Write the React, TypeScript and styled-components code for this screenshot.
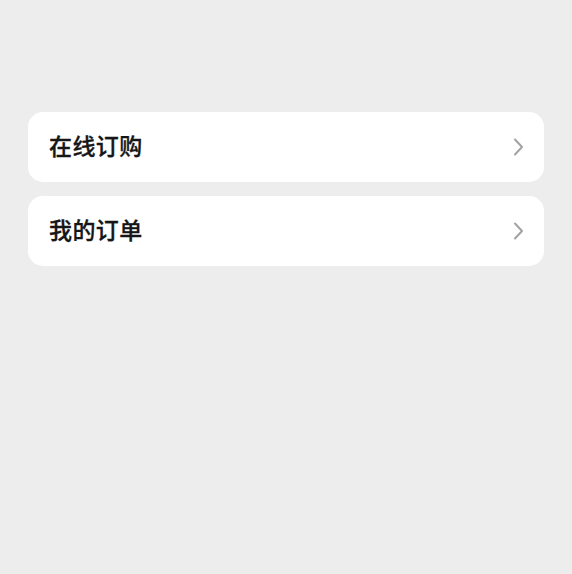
import React from "react";
import styled, { createGlobalStyle } from "styled-components";

const GlobalStyle = createGlobalStyle`
  html, body {
    margin: 0;
    padding: 0;
    background: #ededed;
  }
  body {
    font-family: "Noto Sans CJK SC", "Noto Sans", sans-serif;
  }
`;

const Page = styled.div`
  min-height: 574px;
  padding: 112px 28px 0;
  display: flex;
  flex-direction: column;
  gap: 14px;
  box-sizing: border-box;
`;

const Card = styled.div`
  height: 70px;
  background: #ffffff;
  border-radius: 15px;
  display: flex;
  align-items: center;
  justify-content: space-between;
  padding: 0 20px 4px 21px;
  box-sizing: border-box;
  cursor: pointer;
`;

const Label = styled.span`
  font-size: 23px;
  line-height: 1;
  font-weight: 500;
  color: #161616;
  letter-spacing: 0.4px;
  -webkit-text-stroke: 0.3px #161616;
`;

const Arrow = styled.svg`
  margin-top: 4px;
`;

const Chevron = () => (
  <Arrow width="11" height="18" viewBox="0 0 11 18" fill="none">
    <path d="M2 1.5 L9 9 L2 16.5" stroke="#a3a3a3" strokeWidth="2" strokeLinecap="round" strokeLinejoin="round" />
  </Arrow>
);

const items = ["在线订购", "我的订单"];

export default function App() {
  return (
    <>
      <GlobalStyle />
      <Page>
        {items.map(item => (
          <Card key={item}>
            <Label>{item}</Label>
            <Chevron />
          </Card>
        ))}
      </Page>
    </>
  );
}
